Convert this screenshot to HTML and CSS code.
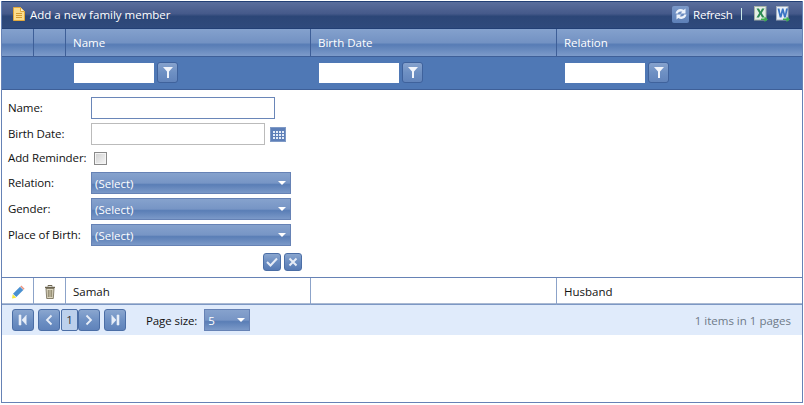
FILE: index.html
```html
<!DOCTYPE html>
<html lang="en">
<head>
<meta charset="utf-8">
<title>Family members</title>
<link rel="stylesheet" href="styles.css">
</head>
<body>
<div class="grid-window">
  <div class="toolbar">
    <div class="toolbar-title">
      <svg class="doc-icon" width="12" height="14" viewBox="0 0 12 14"><path d="M.5.5h7l4 4v9H.5z" fill="#fbdc8c" stroke="#e3a93c"/><path d="M7.500.5v4h4" fill="#fff3c8" stroke="#e3a93c"/><path d="M3 6.500h6M3 8.500h6M3 10.500h6" stroke="#d49a30"/></svg>
      <span>Add a new family member</span>
    </div>
    <div class="toolbar-actions">
      <span class="refresh-box"><svg width="14" height="14" viewBox="0 0 14 14"><path d="M1.500 6.500C2 3 6 .8 9.700 3L11.500 1.500v5H6.500L8.300 4.800C6 3.900 4.300 5 3.800 6.500z" fill="#eef3fb"/><path d="M12.500 7.500C12 11 8 13.200 4.300 11L2.500 12.500v-5h5L5.700 9.200C8 10.100 9.700 9 10.200 7.500z" fill="#eef3fb"/></svg></span>
      <span class="refresh-label">Refresh</span>
      <span class="toolbar-sep"></span>
      <svg class="export-icon" width="14" height="16" viewBox="0 0 14 16"><rect x=".5" y=".5" width="11.500" height="13.500" fill="#e6efe6" stroke="#a8b4a8"/><path d="M2.500 2.500h2.500L6.500 5.500l1.500-3h2.500L7.800 7l2.700 4.500H8L6.500 8.500 5 11.500H2.500L5.200 7z" fill="#2c8a52"/><path d="M7 12.500h3.500V10.500l3.500 3-3.500 2.500v-2H7z" fill="#3cae4e"/></svg>
      <svg class="export-icon" width="14" height="16" viewBox="0 0 14 16"><rect x=".5" y=".5" width="11.500" height="13.500" fill="#e8eff8" stroke="#a4aebc"/><path d="M1.500 2.500h2l1 5.500 1.500-5.500h1.500l1.500 5.500 1-5.500h2L9.800 11.500H8L6.800 6.500 5.500 11.500H3.700z" fill="#3a74c4"/><path d="M7 12.500h3.500V10.500l3.500 3-3.500 2.500v-2H7z" fill="#3cae4e"/></svg>
    </div>
  </div>

  <div class="cols header-row">
    <div class="head-cell"></div>
    <div class="head-cell"></div>
    <div class="head-cell">Name</div>
    <div class="head-cell">Birth Date</div>
    <div class="head-cell last">Relation</div>
  </div>

  <div class="cols filter-row">
    <div class="filter-cell"></div>
    <div class="filter-cell"></div>
    <div class="filter-cell"><span class="filter-input"></span><span class="filter-btn"><svg width="10" height="11" viewBox="0 0 10 11"><path d="M0 0h10L6 4.500V11H4V4.500z" fill="#f2f5fb"/></svg></span></div>
    <div class="filter-cell"><span class="filter-input"></span><span class="filter-btn"><svg width="10" height="11" viewBox="0 0 10 11"><path d="M0 0h10L6 4.500V11H4V4.500z" fill="#f2f5fb"/></svg></span></div>
    <div class="filter-cell last"><span class="filter-input"></span><span class="filter-btn"><svg width="10" height="11" viewBox="0 0 10 11"><path d="M0 0h10L6 4.500V11H4V4.500z" fill="#f2f5fb"/></svg></span></div>
  </div>

  <div class="edit-form">
    <div class="form-row"><label class="form-label">Name:</label><span class="text-input focused"></span></div>
    <div class="form-row date-row"><label class="form-label">Birth Date:</label><span class="text-input date"></span>
      <svg class="cal-icon" width="16" height="15" viewBox="0 0 16 15"><rect x=".5" y=".5" width="15" height="14" fill="#5d7fb8" stroke="#7f9ac6"/><path d="M3 4h2v2H3zM6 4h2v2H6zM9 4h2v2H9zM12 4h2v2h-2zM3 7h2v2H3zM6 7h2v2H6zM9 7h2v2H9zM12 7h2v2h-2zM3 10h2v2H3zM6 10h2v2H6zM9 10h2v2H9zM12 10h2v2h-2z" fill="#e4ecf8"/></svg>
    </div>
    <div class="form-row short"><label class="form-label">Add Reminder:</label><span class="checkbox"></span></div>
    <div class="form-row"><label class="form-label">Relation:</label><span class="combo">(Select)<i class="caret"></i></span></div>
    <div class="form-row"><label class="form-label">Gender:</label><span class="combo">(Select)<i class="caret"></i></span></div>
    <div class="form-row"><label class="form-label">Place of Birth:</label><span class="combo">(Select)<i class="caret"></i></span></div>
    <div class="form-actions">
      <span class="icon-btn"><svg width="12" height="10" viewBox="0 0 12 10"><path d="M1 5l3.500 3.500L11 1.500" fill="none" stroke="#e6ecf6" stroke-width="2"/></svg></span>
      <span class="icon-btn"><svg width="10" height="10" viewBox="0 0 10 10"><path d="M1.500 1.500l7 7M8.500 1.500l-7 7" fill="none" stroke="#e6ecf6" stroke-width="2"/></svg></span>
    </div>
  </div>

  <div class="cols data-row">
    <div class="data-cell icon-cell"><svg width="14" height="14" viewBox="0 0 14 14"><path d="M1 13.500l.7-4.300 3.600 3.600z" fill="#f5e83a"/><path d="M2 8.700L9 1.700l3.300 3.300-7 7z" fill="#4a90d0"/><path d="M9.300 1.400l1-1 3.300 3.300-1 1z" fill="#e9937f"/></svg></div>
    <div class="data-cell icon-cell"><svg width="12" height="14" viewBox="0 0 12 14"><path d="M1 2.500h10" stroke="#6d6650" stroke-width="1.500"/><path d="M4 1.500V.5h4v1" fill="none" stroke="#6d6650"/><path d="M2 3.500h8l-.7 10H2.700z" fill="#dcd6c0" stroke="#6d6650" stroke-width=".8"/><path d="M4.300 5v7M6 5v7M7.700 5v7" stroke="#8a8368"/></svg></div>
    <div class="data-cell">Samah</div>
    <div class="data-cell"></div>
    <div class="data-cell last">Husband</div>
  </div>

  <div class="pager">
    <div class="pager-left">
      <span class="page-btn first"><svg width="10" height="12" viewBox="0 0 10 12"><path d="M1 1h2v10H1zM8.500 1L4 6l4.500 5" fill="#e8eef8" stroke="#e8eef8" stroke-width=".6"/></svg></span>
      <span class="page-btn prev"><svg width="8" height="12" viewBox="0 0 8 12"><path d="M6.500 1.500L2 6l4.500 4.500" fill="none" stroke="#e8eef8" stroke-width="1.800"/></svg></span>
      <span class="page-num">1</span>
      <span class="page-btn next"><svg width="8" height="12" viewBox="0 0 8 12"><path d="M1.500 1.500L6 6l-4.500 4.500" fill="none" stroke="#e8eef8" stroke-width="1.800"/></svg></span>
      <span class="page-btn last-btn"><svg width="10" height="12" viewBox="0 0 10 12"><path d="M7 1h2v10H7zM1.500 1L6 6l-4.500 5" fill="#e8eef8" stroke="#e8eef8" stroke-width=".6"/></svg></span>
      <span class="page-size-label">Page size:</span>
      <span class="combo size-combo">5<i class="caret"></i></span>
    </div>
    <div class="pager-info">1 items in 1 pages</div>
  </div>
</div>
</body>
</html>
```
FILE: styles.css
```css
* { box-sizing: border-box; }
html, body { margin: 0; padding: 0; background: #fff; }
body { width: 804px; height: 405px; padding: 1px 1px 2px 1px; font-family: "Open Sans", "Noto Sans", sans-serif; font-size: 11.500px; color: #111; }
.grid-window { width: 802px; height: 402px; border: 1px solid #6682b5; border-top: 0; background: #fff; }

.toolbar { height: 28px; display: flex; justify-content: space-between; align-items: center; padding: 0 12px 2px 11px; color: #fff; border: 1px solid #223f75; border-width: 1px 0 1px; background: linear-gradient(#5a6e9c 0, #45598a 45%, #2c4677 55%, #2f4a7c 100%); }
.toolbar-title { display: flex; align-items: center; gap: 5px; }
.doc-icon { display: block; }
.toolbar-actions { display: flex; align-items: center; }
.refresh-box { width: 17px; height: 17px; display: flex; align-items: center; justify-content: center; border-radius: 2px; background: linear-gradient(#7b98c8, #5d80b8); margin-right: 4px; }
.refresh-label { width: 39px; letter-spacing: -.2px; }
.toolbar-sep { width: 1px; height: 12px; background: #c8e8e8; margin: 0 12px 0 9px; }
.export-icon { display: block; margin-right: 8px; }
.export-icon:last-child { margin-right: 0; }

.cols { display: grid; grid-template-columns: 32px 32px 245px 246px 1fr; }

.header-row { height: 27px; }
.head-cell { padding: 0 0 0 7px; line-height: 27px; color: #fff; border-right: 1px solid #3e5f98; border-bottom: 1px solid #3e5f98; background: linear-gradient(#84a1cd 0, #7392c3 50%, #577cb5 58%, #7d9bca 100%); }
.head-cell.last { border-right: 0; }

.filter-row { height: 34px; background: #4f78b5; border-bottom: 1px solid #3e5f98; }
.filter-cell { display: flex; align-items: center; gap: 3px; padding: 0 0 0 8px; }
.filter-input { width: 80px; height: 20px; background: #fff; }
.filter-btn { width: 21px; height: 21px; display: flex; align-items: center; justify-content: center; border: 1px solid #3f629c; border-radius: 3px; background: linear-gradient(#86a2cd, #6e90c3 50%, #6284bb); }

.edit-form { height: 188px; padding: 7px 0 0 6px; display: flex; flex-direction: column; border-bottom: 1px solid #6682b5; }
.form-row { height: 26px; display: flex; align-items: flex-start; flex-shrink: 0; }
.form-row.date-row { height: 24px; }
.form-row.short { height: 25px; }
.form-label { width: 83px; line-height: 22px; letter-spacing: -.1px; }
.text-input { width: 184px; height: 22px; border: 1px solid #bbb; background: #fff; }
.text-input.focused { border-color: #6a86b8; }
.text-input.date { width: 174px; }
.cal-icon { margin: 4px 0 0 5px; }
.checkbox { width: 13px; height: 13px; margin: 5px 0 0 3px; border: 1px solid #8a8a8a; background: linear-gradient(135deg, #cfcfcf, #f6f6f6); box-shadow: inset 0 0 0 1px #f4f4f4; }
.combo { position: relative; width: 200px; height: 22px; padding-left: 3px; line-height: 21px; color: #fff; border: 1px solid #6682b5; background: linear-gradient(#86a2cd 0, #7795c5 50%, #5a7eb6 58%, #7b99c8 100%); }
.caret { position: absolute; right: 4px; top: 8px; width: 0; height: 0; border: 4px solid transparent; border-top: 4px solid #fff; border-bottom: 0; }
.form-actions { display: flex; justify-content: flex-end; gap: 3px; width: 294px; margin-top: 3px; }
.icon-btn { width: 18px; height: 18px; display: flex; align-items: center; justify-content: center; border: 1px solid #4b6ea6; border-radius: 3px; background: linear-gradient(#8aa6cf, #6b8dc1 50%, #567ab4); }

.data-row { height: 26px; border-bottom: 1px solid #aab9d2; }
.data-cell { padding-left: 7px; line-height: 27px; color: #111; border-right: 1px solid #8ca3c9; }
.data-cell.last { border-right: 0; }
.icon-cell { padding: 0; display: flex; align-items: center; justify-content: center; }

.pager { height: 31px; display: flex; justify-content: space-between; align-items: center; padding: 0 11px 0 10px; background: #e0ebfb; border-top: 1px solid #7d98c4; }
.pager-left { display: flex; align-items: center; }
.page-btn { width: 22px; height: 22px; display: flex; align-items: center; justify-content: center; border: 1px solid #4b6ea6; border-radius: 3px; background: linear-gradient(#8aa6cf, #6f91c4 50%, #5f82ba); }
.page-btn.first { margin-right: 4px; }
.page-btn.last-btn { margin-left: 4px; }
.page-num { width: 17px; height: 22px; text-align: center; line-height: 20px; margin: 0 0 0 1px; border: 1px solid #4b6ea6; border-radius: 2px; background: #bcd0ec; color: #333; }
.page-size-label { margin: 0 7px 0 20px; letter-spacing: -.1px; }
.size-combo { width: 46px; padding-left: 3px; }
.pager-info { color: #6e7a88; }
```
